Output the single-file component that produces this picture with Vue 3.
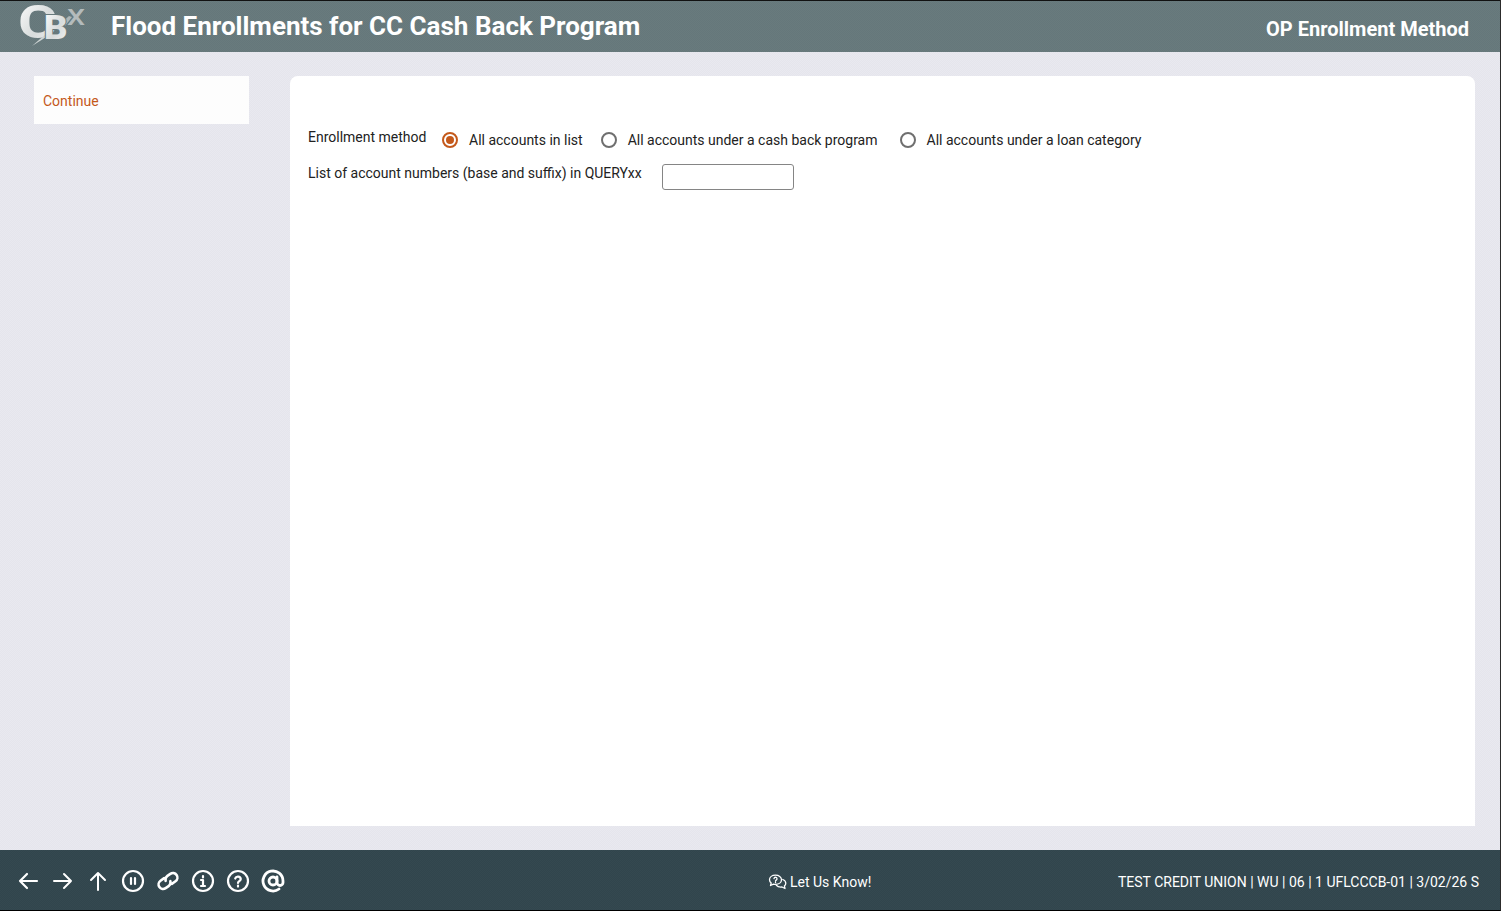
<script setup>
const methods = [
  { label: 'All accounts in list', on: true },
  { label: 'All accounts under a cash back program', on: false },
  { label: 'All accounts under a loan category', on: false },
];
</script>

<template>
  <div class="page">
    <header class="top">
      <svg class="logo" width="70" height="50" viewBox="0 0 70 50">
        <defs>
          <linearGradient id="lg" x1="0" y1="0" x2="1" y2="1">
            <stop offset="0" stop-color="#ffffff" />
            <stop offset="0.55" stop-color="#d8dcdc" />
            <stop offset="1" stop-color="#f4f5f5" />
          </linearGradient>
        </defs>
        <text x="49" y="23" class="logo-x" transform="translate(49 23) scale(1.3 1) translate(-49 -23)">X</text>
        <path d="M42 22 L51 14 L54 15 L47 24 Z" fill="#aeb6b7" />
        <text x="0" y="36" class="logo-c" fill="url(#lg)" transform="scale(1.3 1)">C</text>
        <path d="M14 44 L29 31 L36 27 L33 32 Z" fill="#cfd5d5" />
        <text x="26" y="37" class="logo-b" fill="url(#lg)" transform="translate(26 37) scale(1.1 1) translate(-26 -37)">B</text>
      </svg>
      <h1 class="title">Flood Enrollments for CC Cash Back Program</h1>
      <div class="sub">OP Enrollment Method</div>
    </header>

    <main class="main">
      <nav class="side">
        <a class="side-link">Continue</a>
      </nav>
      <section class="card">
        <div class="row row-method">
          <label class="lbl">Enrollment method</label>
          <div class="radios">
            <label v-for="m in methods" :key="m.label" class="radio">
              <span class="dot" :class="{ on: m.on }"></span>
              <span>{{ m.label }}</span>
            </label>
          </div>
        </div>
        <div class="row row-list">
          <label class="lbl">List of account numbers (base and suffix) in QUERYxx</label>
          <input class="inp" type="text" />
        </div>
      </section>
    </main>

    <footer class="bot">
      <div class="icons">
        <svg width="24" height="24" viewBox="0 0 24 24" class="ic"><path d="M21 12H4M11 5l-7 7 7 7" /></svg>
        <svg width="24" height="24" viewBox="0 0 24 24" class="ic thin"><path d="M3 12h17M13 5l7 7-7 7" /></svg>
        <svg width="24" height="24" viewBox="0 0 24 24" class="ic thin"><path d="M12 21V4M5 11l7-7 7 7" /></svg>
        <svg width="24" height="24" viewBox="0 0 24 24" class="ic"><circle cx="12" cy="12" r="10" /><path d="M10 9v6M14 9v6" /></svg>
        <svg width="24" height="24" viewBox="0 0 24 24" class="ic link">
          <g transform="rotate(-35 12 12)">
            <path d="M10.500 7.500H6a4.500 4.500 0 0 0 0 9h4a4.500 4.500 0 0 0 3.800-3" />
            <path d="M13.500 16.500H18a4.500 4.500 0 0 0 0-9h-4a4.500 4.500 0 0 0-3.800 3" />
          </g>
        </svg>
        <svg width="24" height="24" viewBox="0 0 24 24" class="ic"><circle cx="12" cy="12" r="10" /><path d="M10 11h2v6M10 17h4M12 7v1.500" /></svg>
        <svg width="24" height="24" viewBox="0 0 24 24" class="ic"><circle cx="12" cy="12" r="10" /><path d="M9.200 9.500a2.900 2.900 0 0 1 5.600.6c0 1.900-2.800 2.200-2.800 3.900M12 16.600v1" /></svg>
        <svg width="24" height="24" viewBox="0 0 24 24" class="ic bold"><circle cx="12" cy="12" r="4" /><path d="M16 8v5.500a3 3 0 0 0 6 0V12a10 10 0 1 0-4 8" /></svg>
      </div>
      <div class="know">
        <svg width="19" height="16" viewBox="0 0 19 16" class="chat">
          <path d="M7.500 1.200c-3.400 0-6 2-6 4.600 0 1.300.6 2.400 1.700 3.200L2.500 11.500l3-1.300c.6.100 1.300.2 2 .2 3.400 0 6-2 6-4.600s-2.600-4.600-6-4.600z" />
          <path d="M14.800 5.500c1.800.7 3 2.100 3 3.700 0 1.100-.5 2-1.400 2.800l.6 2.500-3-1.500c-2 .3-4.300-.2-5.700-1.700" />
          <path d="M6 4.600a1.500 1.500 0 1 1 2.200 1.500c-.5.3-.7.6-.7 1.100M7.500 8.300v.4" />
        </svg>
        <span>Let Us Know!</span>
      </div>
      <div class="info">TEST CREDIT UNION | WU | 06 | 1 UFLCCCB-01 | 3/02/26 S</div>
    </footer>
  </div>
</template>

<style>
html, body { margin: 0; background: #e7e7ee; }
</style>

<style scoped>
.page { height: 911px; box-sizing: border-box; display: flex; flex-direction: column; background: repeating-conic-gradient(#e5e5ec 0 25%, #e9e9f0 0 50%) 0 0 / 2px 2px; font-family: Roboto, "Liberation Sans", sans-serif; border-right: 1px solid #2c2c2c; border-bottom: 1px solid #000; overflow: hidden; }

.top { height: 52px; box-sizing: border-box; flex: none; display: flex; align-items: center; background: repeating-conic-gradient(#65777b 0 25%, #697b7d 0 50%) 0 0 / 2px 2px; border-top: 1px solid #111; color: #fff; padding: 0 31px 0 18px; }
.logo { flex: none; margin-right: 23px; overflow: visible; }
.logo-c { font: 700 46px Roboto, sans-serif; }
.logo-b { font: 900 33px Roboto, sans-serif; stroke: #67797c; stroke-width: 2px; paint-order: stroke; }
.logo-x { font: 500 22px Roboto, sans-serif; fill: #b4bbbc; }
.title { margin: -2px 0 0; font-size: 26px; font-weight: 700; line-height: 50px; }
.sub { margin-left: auto; font-size: 20px; font-weight: 700; padding-top: 5px; }

.main { flex: 1; min-height: 0; display: flex; padding: 24px 25px 24px 34px; }
.side { flex: none; width: 215px; margin-right: 41px; }
.side-link { display: block; height: 48px; line-height: 50px; box-sizing: border-box; padding-left: 9px; background: #fdfdfd; color: #c4591b; font-size: 14px; }
.card { flex: 1; background: #fff; border-radius: 8px 8px 0 0; padding: 51px 18px 0; color: #222; font-size: 14px; }

.row { display: flex; }
.lbl { flex: none; line-height: 20px; }
.row-method { height: 37px; }
.row-method .lbl { width: 134px; }
.radios { display: flex; gap: 18px; padding-top: 3px; }
.radio { display: flex; align-items: center; height: 20px; gap: 11px; }
.radio:last-child { margin-left: 4px; }
.dot { width: 16px; height: 16px; box-sizing: border-box; border: 2px solid #6f6f6f; border-radius: 50%; display: block; }
.dot.on { border-color: #c4591b; padding: 2px; }
.dot.on::before { content: ''; display: block; width: 8px; height: 8px; border-radius: 50%; background: #c4591b; }
.row-list .lbl { width: 354px; margin-top: -1px; }
.inp { width: 132px; height: 26px; box-sizing: border-box; margin: 0; border: 1px solid #858585; border-radius: 3px; background: #fff; padding: 0 6px; }

.bot { height: 60px; box-sizing: border-box; flex: none; display: grid; grid-template-columns: 752px auto 1fr; align-items: center; background: repeating-conic-gradient(#31454d 0 25%, #354950 0 50%) 0 0 / 2px 2px; color: #fff; font-size: 14px; padding: 2px 21px 0 16px; }
.icons { display: flex; gap: 11px; }
.ic { fill: none; stroke: #fff; stroke-width: 2.2; stroke-linecap: round; stroke-linejoin: round; }
.ic.thin { stroke-width: 2; }
.ic.link { stroke-width: 2.6; }
.ic.bold { stroke-width: 2.8; }
.know { display: flex; align-items: center; gap: 3px; padding-top: 2px; }
.chat { fill: none; stroke: #fff; stroke-width: 1.3; stroke-linecap: round; stroke-linejoin: round; }
.info { justify-self: end; padding-top: 2px; }
</style>
